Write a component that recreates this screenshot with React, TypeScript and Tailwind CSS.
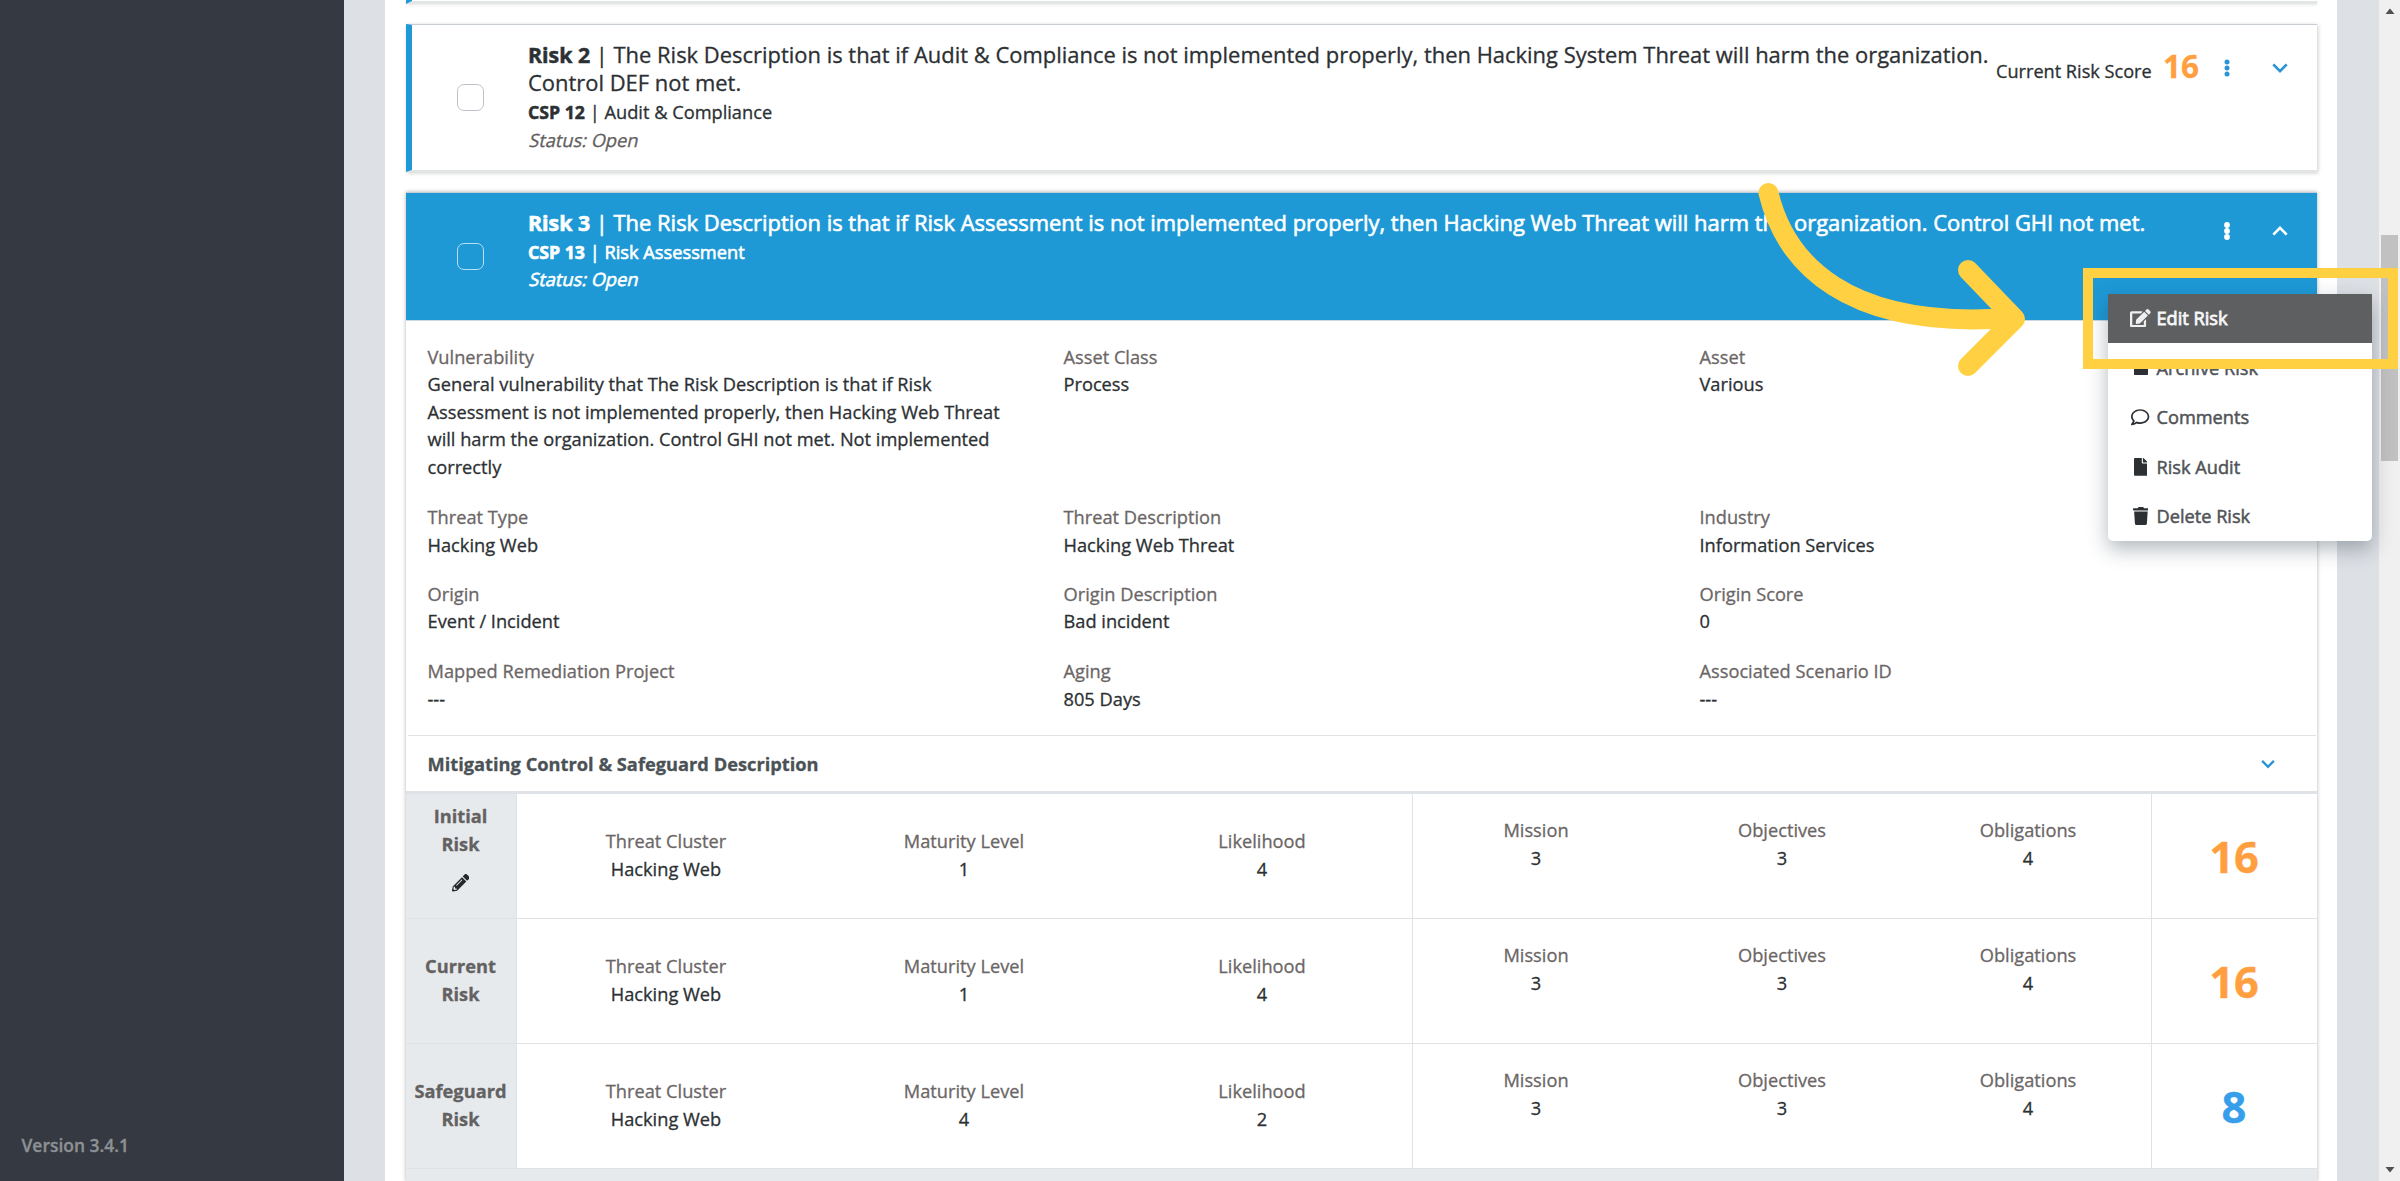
import { FaArchive, FaEdit, FaFile, FaPencilAlt, FaRegComment, FaTrash } from "react-icons/fa";

type FieldData = { label: string; value: string };

const detailRows: { gap: string; fields: FieldData[] }[] = [
  {
    gap: "mb-[23px]",
    fields: [
      {
        label: "Vulnerability",
        value:
          "General vulnerability that The Risk Description is that if Risk Assessment is not implemented properly, then Hacking Web Threat will harm the organization. Control GHI not met. Not implemented correctly",
      },
      { label: "Asset Class", value: "Process" },
      { label: "Asset", value: "Various" },
    ],
  },
  {
    gap: "mb-[21.5px]",
    fields: [
      { label: "Threat Type", value: "Hacking Web" },
      { label: "Threat Description", value: "Hacking Web Threat" },
      { label: "Industry", value: "Information Services" },
    ],
  },
  {
    gap: "mb-[22.5px]",
    fields: [
      { label: "Origin", value: "Event / Incident" },
      { label: "Origin Description", value: "Bad incident" },
      { label: "Origin Score", value: "0" },
    ],
  },
  {
    gap: "",
    fields: [
      { label: "Mapped Remediation Project", value: "---" },
      { label: "Aging", value: "805 Days" },
      { label: "Associated Scenario ID", value: "---" },
    ],
  },
];

const scoreRows = [
  { name: "Initial", editable: true, maturity: "1", likelihood: "4", score: "16", color: "text-[#ff9f40]" },
  { name: "Current", editable: false, maturity: "1", likelihood: "4", score: "16", color: "text-[#ff9f40]" },
  { name: "Safeguard", editable: false, maturity: "4", likelihood: "2", score: "8", color: "text-[#369eeb]" },
];

function Field({ label, value }: FieldData) {
  return (
    <div>
      <div className="text-[#6b6666]">{label}</div>
      <div className="text-[#2c3033]">{value}</div>
    </div>
  );
}

function Kebab({ r = 2.5 }: { r?: number }) {
  return (
    <svg width="8" height="20" viewBox="0 0 8 20" fill="currentColor">
      <circle cx="4" cy="4" r={r} />
      <circle cx="4" cy="10" r={r} />
      <circle cx="4" cy="16" r={r} />
    </svg>
  );
}

function Chevron({ up = false, size = 16 }: { up?: boolean; size?: number }) {
  return (
    <svg width={size} height={size} viewBox="0 0 16 16" fill="none" stroke="currentColor" strokeWidth="2.7">
      <path d={up ? "M1.3 11.6 8 4.9l6.7 6.7" : "M1.3 4.4 8 11.1l6.7-6.7"} />
    </svg>
  );
}

function MenuItem({ icon, label, active = false }: { icon: React.ReactNode; label: string; active?: boolean }) {
  return (
    <div
      className={
        active
          ? "flex h-[49.5px] items-center bg-[#5e5f61] pl-[22px] text-white/90 [-webkit-text-stroke:0.8px]"
          : "flex h-[49.5px] items-center pl-[22px] text-[#505357] [-webkit-text-stroke:0.5px]"
      }
    >
      <span className={active ? "flex w-[21px] justify-center" : "flex w-[21px] justify-center text-[#2c3033]"}>{icon}</span>
      <span className="ml-[5.5px] mt-px text-[18.2px]">{label}</span>
    </div>
  );
}

export default function App() {
  return (
    <div className="relative flex h-[1181px] w-[2400px] overflow-hidden bg-[#dde0e5] font-['Open_Sans',sans-serif] text-[18.24px] leading-[27.5px] [-webkit-text-stroke:0.3px]">
      <aside className="flex w-[344px] shrink-0 flex-col justify-end bg-[#353941] pb-[22px] pl-[21.5px]">
        <span className="text-[17.45px] font-semibold text-[#8e9194]">Version 3.4.1</span>
      </aside>

      <main className="ml-[41px] flex w-[1952px] shrink-0 flex-col bg-white pl-[21px] pr-[20px]">
        <div className="h-[4px] shrink-0 border-b-[3px] border-l-[6px] border-b-[#e3e6e6] border-l-[#1e99d6] shadow-[0_1px_3px_rgba(0,0,0,0.1)]" />

        <section className="mt-[20px] flex h-[148px] shrink-0 border-t border-b-[2px] border-l-[6px] border-b-[#e2e5e5] border-l-[#1e99d6] border-t-[#c8ccd3] bg-white shadow-[1px_1px_4px_rgba(0,0,0,0.2)]">
          <div className="flex w-[116px] shrink-0 items-center pl-[45px]">
            <div className="size-[27px] rounded-[7px] border-[1.5px] border-[#bfc3c9]" />
          </div>
          <div className="w-[1468px] shrink-0 pt-[15.5px] text-[#2c3033]">
            <div className="mb-px text-[21.94px] leading-[28.8px]">
              <b className="text-[21.3px] [-webkit-text-stroke:0.5px]">Risk 2</b> | The Risk Description is that if Audit &amp; Compliance is not implemented properly, then Hacking System Threat will harm the organization. Control DEF not met.
            </div>
            <div>
              <b className="text-[17.7px] [-webkit-text-stroke:0.5px]">CSP 12</b> | Audit &amp; Compliance
            </div>
            <div className="w-fit origin-[0_75%] -skew-x-[13deg] text-[#625e5e]">Status: Open</div>
          </div>
          <div className="flex pt-[34px] text-[#2c3033]">
            <div className="-mt-[3px] flex h-[20px] items-baseline">
              <span className="w-[167px] whitespace-nowrap text-[18.15px] leading-[20px]">Current Risk Score</span>
              <span className="w-[60px] text-[31.5px] font-bold leading-[20px] text-[#ff9f40]">16</span>
            </div>
            <span className="-mt-[1px] flex h-[20px] items-center gap-[41px] text-[#2a94d6]">
              <Kebab />
              <Chevron />
            </span>
          </div>
        </section>

        <section className="mt-[20px] flex grow flex-col bg-white shadow-[0_0_4px_rgba(0,0,0,0.3)]">
          <header className="flex h-[129px] shrink-0 border-b border-t border-b-[#cbd9e2] border-t-[#c5ced6] bg-[#1e99d6] text-white [-webkit-text-stroke:0.6px]">
            <div className="flex w-[122px] shrink-0 items-center pl-[51px]">
              <div className="size-[27px] rounded-[7px] border-[1.5px] border-[#b9dff4]" />
            </div>
            <div className="w-[1695px] shrink-0 pt-[16px]">
              <div className="mb-px whitespace-nowrap text-[21.94px] leading-[28.8px]">
                <b className="text-[21.3px]">Risk 3</b> | The Risk Description is that if Risk Assessment is not implemented properly, then Hacking Web Threat will harm the organization. Control GHI not met.
              </div>
              <div>
                <b className="text-[17.7px]">CSP 13</b> | Risk Assessment
              </div>
              <div className="w-fit origin-[0_75%] -skew-x-[13deg]">Status: Open</div>
            </div>
            <span className="mt-[28px] flex h-[20px] items-center gap-[41px]">
              <Kebab r={2.9} />
              <Chevron up />
            </span>
          </header>

          <div className="h-[414px] shrink-0 pl-[21.5px] pt-[22.5px]">
            {detailRows.map((row) => (
              <div key={row.fields[0].label} className={`grid grid-cols-[590px_590px_590px] gap-x-[46px] ${row.gap}`}>
                {row.fields.map((f) => (
                  <Field key={f.label} {...f} />
                ))}
              </div>
            ))}
          </div>

          <div className="mx-[1.5px] flex h-[56px] shrink-0 items-center justify-between border-t-[1.5px] border-[#dfe3e6] pl-[20px] pr-[41px]">
            <span className="mt-px text-[18.26px] font-bold text-[#4b5256]">Mitigating Control &amp; Safeguard Description</span>
            <span className="text-[#2a94d6]">
              <Chevron size={14} />
            </span>
          </div>

          <div className="border-t-[3px] border-[#dfe3e7]">
            {scoreRows.map((row) => (
              <div
                key={row.name}
                className="grid h-[125px] grid-cols-[111px_896px_739px_1fr] divide-x divide-[#e0e3e5] border-b-[1.5px] border-[#dfe3e5] text-center"
              >
                <div className={row.editable ? "bg-[#e7eaed] pr-px pt-[9px]" : "bg-[#e7eaed] pr-px pt-[34px]"}>
                  <div className="font-bold leading-[27.5px] text-[#636161]">
                    {row.name}
                    <br />
                    Risk
                  </div>
                  {row.editable && <FaPencilAlt className="mx-auto mt-[16px] size-[17.5px] text-[#26292c]" />}
                </div>
                <div className="grid grid-cols-3 pr-px pt-[34px]">
                  <Field label="Threat Cluster" value="Hacking Web" />
                  <Field label="Maturity Level" value={row.maturity} />
                  <Field label="Likelihood" value={row.likelihood} />
                </div>
                <div className="grid grid-cols-3 pt-[23px]">
                  <Field label="Mission" value="3" />
                  <Field label="Objectives" value="3" />
                  <Field label="Obligations" value="4" />
                </div>
                <div className={`pr-px pt-[41px] text-[43.4px] font-bold leading-none ${row.color}`}>{row.score}</div>
              </div>
            ))}
          </div>
          <div className="grow bg-[#e7eaed]" />
        </section>
      </main>

      <div className="ml-auto flex w-[21px] shrink-0 flex-col items-center bg-[#f0f0f0]">
        <svg className="mt-[8px] shrink-0" width="10" height="6" viewBox="0 0 10 6" fill="#505050">
          <path d="M5 0.5 9.5 6h-9z" />
        </svg>
        <div className="mt-[221px] h-[226px] w-[17px] shrink-0 bg-[#c1c1c1]" />
        <svg className="mb-[8px] mt-auto shrink-0" width="10" height="6" viewBox="0 0 10 6" fill="#505050">
          <path d="M5 5.5.5 0h9z" />
        </svg>
      </div>

      <div className="absolute left-[2108px] top-[293.5px] h-[247.5px] w-[264px] rounded-b-[5px] bg-white shadow-[0_8px_20px_rgba(33,47,61,0.34)]">
        <MenuItem active icon={<FaEdit className="h-[18.4px] w-[20.7px]" />} label="Edit Risk" />
        <MenuItem icon={<FaArchive className="size-[16px]" />} label="Archive Risk" />
        <MenuItem icon={<FaRegComment className="size-[18.3px]" />} label="Comments" />
        <MenuItem icon={<FaFile className="h-[17.8px] w-[13.4px]" />} label="Risk Audit" />
        <MenuItem icon={<FaTrash className="h-[18px] w-[15.8px]" />} label="Delete Risk" />
      </div>

      <div className="absolute left-[2082.5px] top-[268px] h-[101px] w-[315.5px] border-[10px] border-[#ffd042]" />
      <svg
        className="absolute left-[1740px] top-[160px]"
        width="310"
        height="240"
        viewBox="1740 160 310 240"
        fill="none"
        stroke="#ffd042"
        strokeWidth="20"
        strokeLinecap="round"
        strokeLinejoin="round"
      >
        <path d="M1768.5 193C1785 262 1845 330 2010 318" />
        <path d="M1968 270 2015 319 1968 366" />
      </svg>
    </div>
  );
}
